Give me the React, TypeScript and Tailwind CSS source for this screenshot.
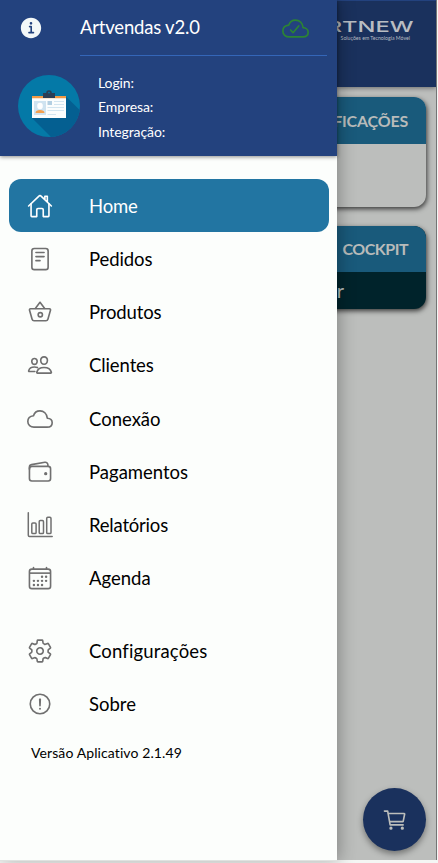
import type { ComponentType } from 'react';
import {
  IoAlertCircleOutline,
  IoBasketOutline,
  IoCalendarOutline,
  IoCartOutline,
  IoCloudDoneOutline,
  IoCloudOutline,
  IoHomeOutline,
  IoInformationCircle,
  IoPeopleOutline,
  IoReaderOutline,
  IoSettingsOutline,
  IoWalletOutline,
} from 'react-icons/io5';

type MenuItem = {
  label: string;
  icon: ComponentType<{ className?: string }>;
  tracking: string;
};

function ReportIcon({ className }: { className?: string }) {
  return (
    <svg
      className={className}
      viewBox="0 0 26 26"
      fill="none"
      stroke="currentColor"
      strokeWidth="1.5"
      strokeLinecap="round"
      strokeLinejoin="round"
    >
      <path d="M1.3 0.8v22.4a1.2 1.2 0 0 0 1.2 1.2h22.7" />
      <rect x="4.8" y="11" width="4.3" height="10.5" rx="1.1" />
      <rect x="12.2" y="8.6" width="4.3" height="12.9" rx="1.1" />
      <rect x="19.7" y="5.3" width="4.3" height="16.2" rx="1.1" />
    </svg>
  );
}

const mainItems: MenuItem[] = [
  { label: 'Home', icon: IoHomeOutline, tracking: 'tracking-[-0.2px]' },
  { label: 'Pedidos', icon: IoReaderOutline, tracking: 'tracking-[-0.1px]' },
  { label: 'Produtos', icon: IoBasketOutline, tracking: 'tracking-[-0.15px]' },
  { label: 'Clientes', icon: IoPeopleOutline, tracking: 'tracking-[-0.1px]' },
  { label: 'Conexão', icon: IoCloudOutline, tracking: 'tracking-normal' },
  { label: 'Pagamentos', icon: IoWalletOutline, tracking: 'tracking-normal' },
  { label: 'Relatórios', icon: ReportIcon, tracking: 'tracking-[-0.2px]' },
  { label: 'Agenda', icon: IoCalendarOutline, tracking: 'tracking-normal' },
];

const extraItems: MenuItem[] = [
  { label: 'Configurações', icon: IoSettingsOutline, tracking: 'tracking-[0.15px]' },
  { label: 'Sobre', icon: IoAlertCircleOutline, tracking: 'tracking-normal' },
];

function MenuRow({ item, active = false }: { item: MenuItem; active?: boolean }) {
  const Icon = item.icon;

  return (
    <li
      className={`flex h-[53.25px] items-center rounded-xl pl-[18px] ${
        active ? 'bg-[#2275a2] text-white' : 'text-black'
      }`}
    >
      <Icon className={`size-[26px] shrink-0 ${active ? 'text-white' : 'text-[#707070]'}`} />
      <span className={`ml-9 text-[18.5px] leading-6 ${item.tracking}`}>{item.label}</span>
    </li>
  );
}

function BadgeAvatar() {
  return (
    <svg className="size-[62px] shrink-0" viewBox="0 0 62 62">
      <circle cx="31" cy="31" r="31" fill="#0479a7" />
      <path d="M48 21.5 L61.7 35 A31 31 0 0 1 33 62 L14 43 Z" fill="#045f91" />
      <path d="M14 21h34v22H14z" fill="#fbfdfd" />
      <path d="M14 21h34v2.3H14z" fill="#f29a45" />
      <path d="M25 23v-5h3.2a2.8 2.8 0 0 1 5.6 0H37v5z" fill="#2c3e55" />
      <circle cx="31" cy="17.6" r="0.9" fill="#0479a7" />
      <path d="M16 26h12v14H16z" fill="#cfe3f0" />
      <ellipse cx="22" cy="31" rx="2.8" ry="3.3" fill="#fff" />
      <path d="M17.5 38c0-2.2 2-3 4.5-3s4.5.8 4.5 3z" fill="#f4a04e" />
      <path d="M29.5 26H34v4h-4.5z" fill="#b3cfe2" />
      <path
        d="M36 26.5h10M36 29.5h10M29.5 32.5H46M29.5 35.5H46M29.5 39.5H38"
        stroke="#d3e5f0"
        strokeWidth="1"
      />
    </svg>
  );
}

function Dashboard() {
  return (
    <div className="relative flex h-[860px] w-[100px] flex-col overflow-hidden border-r border-[#747575] bg-[#bcbebc]">
      <header className="flex h-[87px] shrink-0 flex-col items-end border-t border-[#23427e] bg-[#1a315d] pt-[19px] pr-[22px] shadow-[0_1px_5px_rgba(0,0,0,0.45)]">
        <span className="origin-right scale-x-[1.58] font-['Inter'] text-[15px] leading-[13px] font-medium text-[#b9bdc2]">
          ARTNEW
        </span>
        <span className="mt-[2px] mr-[4px] text-[5.2px] leading-[7px] whitespace-nowrap text-[#b9bdc2]">
          Soluções em Tecnologia Móvel
        </span>
      </header>

      <main className="flex flex-col items-end gap-[19px] pt-[10px] pr-[10px] text-[#b8bbba]">
        <section className="flex h-[110px] w-[260px] flex-col overflow-hidden rounded-xl bg-[#bcbebc] shadow-[1px_2px_5px_rgba(0,0,0,0.7)]">
          <h2 className="flex h-[47px] items-center justify-end bg-[#195a7b] pr-[18px] text-base font-bold tracking-[-0.2px]">
            NOTIFICAÇÕES
          </h2>
        </section>
        <section className="flex h-[83px] w-[260px] flex-col overflow-hidden rounded-xl bg-[#00232b] shadow-[1px_2px_5px_rgba(0,0,0,0.7)]">
          <h2 className="flex h-[46px] items-center justify-end bg-[#195a7b] pr-[18px] text-base font-bold tracking-[-0.5px]">
            COCKPIT
          </h2>
          <p className="pt-1 pr-[82px] text-right text-xl">Acessar</p>
        </section>
      </main>

      <button className="absolute right-[10px] bottom-[9px] flex size-[63px] items-center justify-center rounded-full bg-[#1a315d] text-[#bcbebc] shadow-[0_3px_6px_rgba(0,0,0,0.4)]">
        <IoCartOutline className="size-[26px]" />
      </button>
    </div>
  );
}

export default function App() {
  return (
    <div className="relative flex h-[863px] w-[438px] overflow-hidden bg-[#f4f6f4] font-['Lato',sans-serif] [font-variant-ligatures:none]">
      {/* Drawer */}
      <aside className="relative z-10 flex h-[861px] w-[337px] shrink-0 flex-col border-b border-[#e0e2e0] bg-[#fcfefc] shadow-[2px_0_16px_rgba(0,0,0,0.3)]">
        <header className="flex h-[156px] shrink-0 flex-col bg-[#23427e] text-white shadow-[0_1px_4px_rgba(0,0,0,0.45)]">
          <div className="flex h-[56px] items-center pr-[10px] pl-[18px]">
            <IoInformationCircle className="size-[26px] shrink-0 text-[#f4f8f8]" />
            <div className="ml-auto flex h-full w-[247px] items-center justify-between border-b border-[#3466b8] pt-px pr-[18px]">
              <h1 className="text-[18.5px] tracking-[-0.2px]">Artvendas v2.0</h1>
              <IoCloudDoneOutline className="size-[27px] text-[#2c8434]" />
            </div>
          </div>
          <div className="flex items-start pt-[19px] pl-[18px]">
            <BadgeAvatar />
            <dl className="-mt-[4px] ml-[18px] text-sm leading-[24.3px] tracking-[-0.1px]">
              <dt>Login:</dt>
              <dt>Empresa:</dt>
              <dt>Integração:</dt>
            </dl>
          </div>
        </header>

        <nav className="pt-[23px] pr-[8.5px] pl-[9px]">
          <ul>
            {mainItems.map((item, index) => (
              <MenuRow key={item.label} item={item} active={index === 0} />
            ))}
          </ul>
          <ul className="mt-[19px]">
            {extraItems.map((item) => (
              <MenuRow key={item.label} item={item} />
            ))}
          </ul>
        </nav>
        <p className="pt-3 pl-[31px] text-sm tracking-[0.1px]">Versão Aplicativo 2.1.49</p>
      </aside>

      <Dashboard />
    </div>
  );
}
